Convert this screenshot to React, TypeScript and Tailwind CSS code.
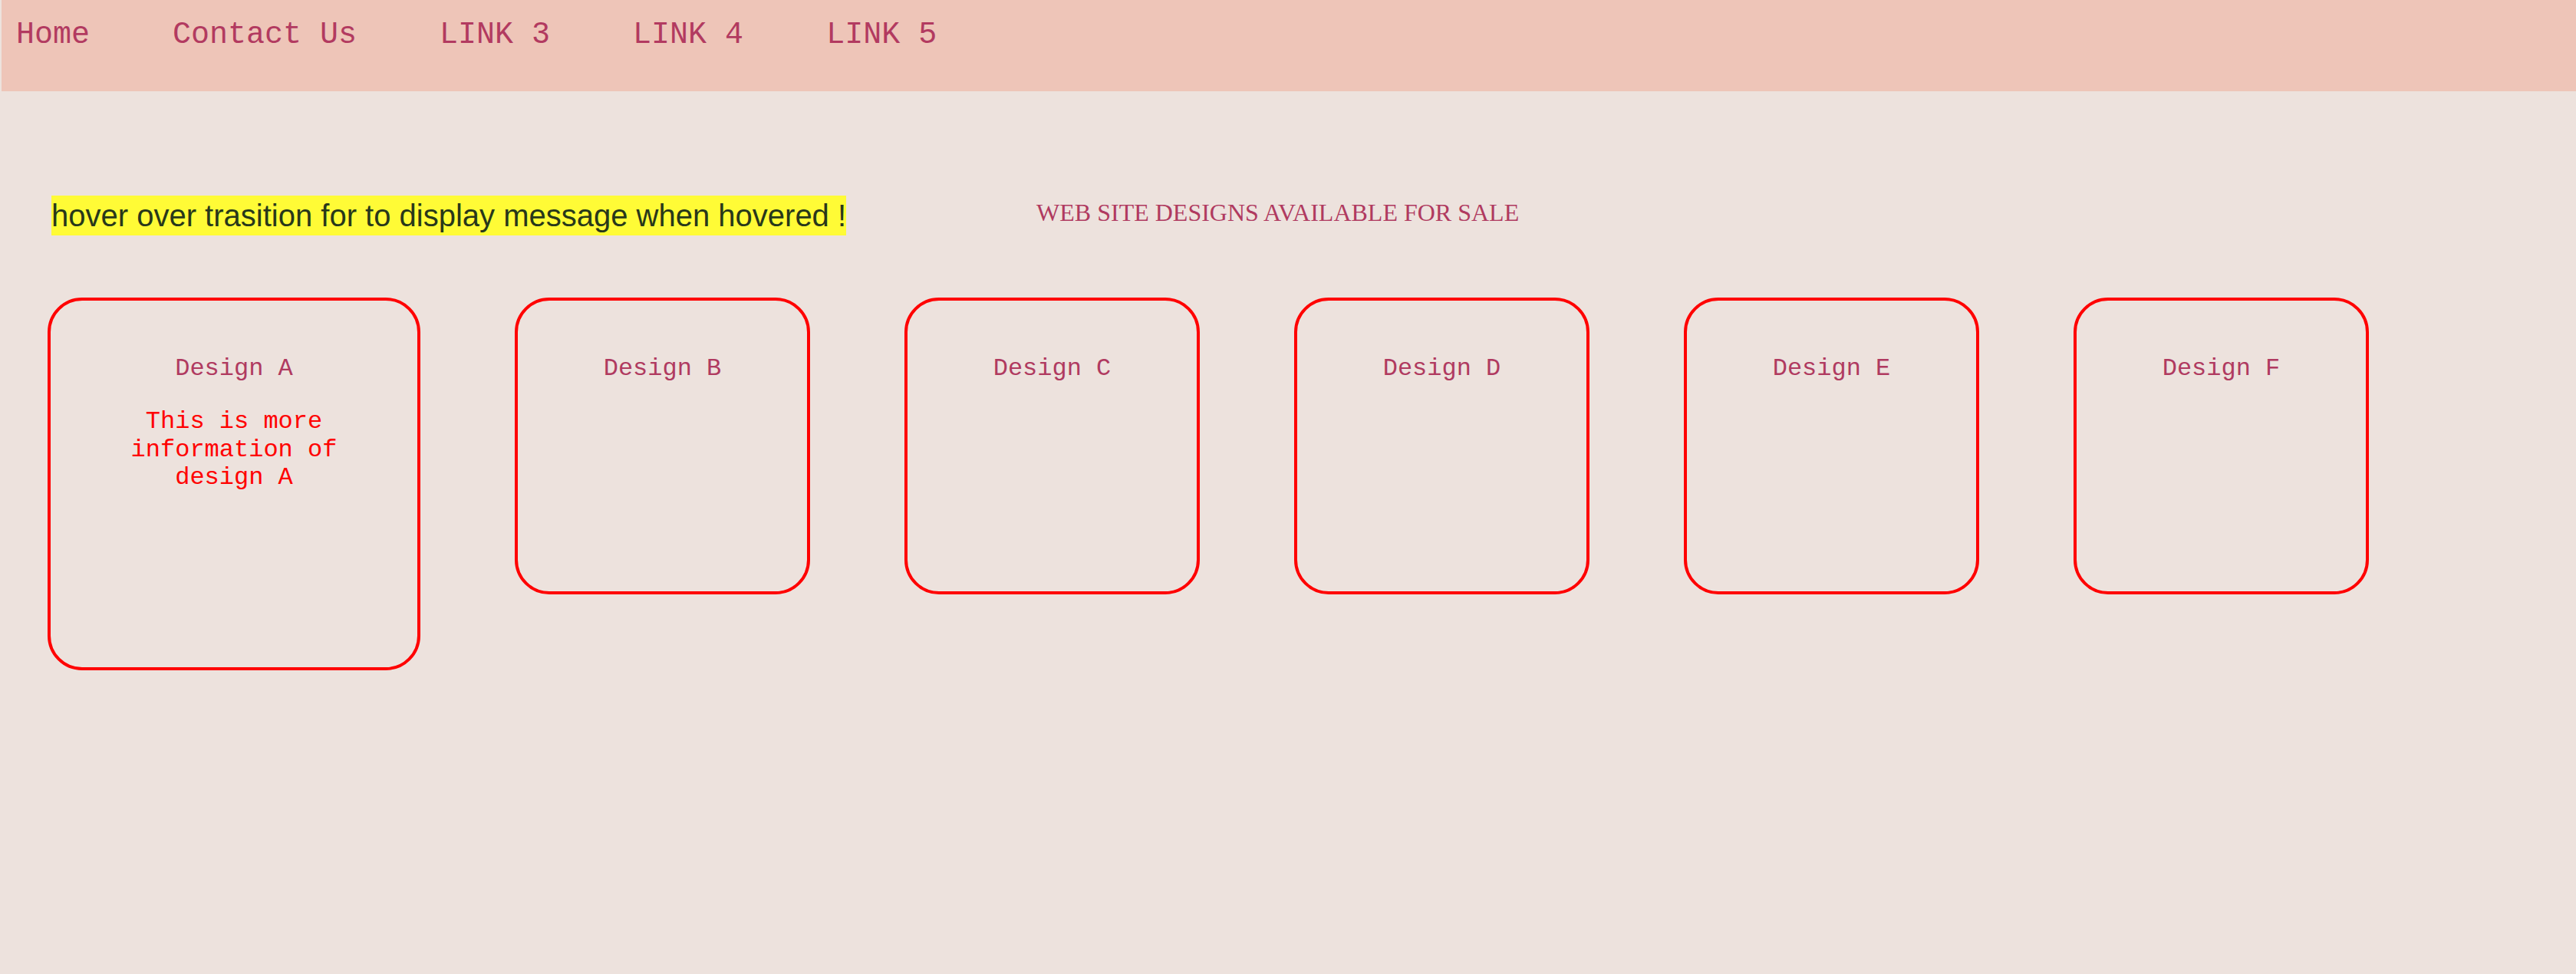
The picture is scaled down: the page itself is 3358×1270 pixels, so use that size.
import React from "react";

const NavBar = () => {
  const links = ["Home", "Contact Us", "LINK 3", "LINK 4", "LINK 5"];

  return (
    <nav className="ml-[2px] h-[119px] bg-[#eec5b8] pl-[19px] pt-[23px]">
      <ul className="flex gap-[108px]">
        {links.map((link) => (
          <li key={link}>
            <a
              href="#"
              className="whitespace-pre font-['Liberation_Mono','Courier_New',monospace] text-[40px] leading-[1.133] text-[#b23a60]"
            >
              {link}
            </a>
          </li>
        ))}
      </ul>
    </nav>
  );
};

const DesignCard = ({
  name,
  info,
  hovered,
}: {
  name: string;
  info?: string;
  hovered?: boolean;
}) => {
  return (
    <div
      className={
        hovered
          ? "w-[486px] h-[486px] shrink-0 rounded-[45px] border-4 border-[#ff0000] pt-[71px] text-center font-['Liberation_Mono','Courier_New',monospace] text-[32px] leading-[1.133]"
          : "w-[385px] h-[387px] shrink-0 rounded-[45px] border-4 border-[#ff0000] pt-[71px] text-center font-['Liberation_Mono','Courier_New',monospace] text-[32px] leading-[1.133]"
      }
    >
      <h3 className="whitespace-pre text-[#b03a60]">{name}</h3>
      {hovered && info && (
        <p className="mx-auto mt-[33px] w-[300px] text-[#ff0000]">{info}</p>
      )}
    </div>
  );
};

export default function App() {
  const designs = [
    { name: "Design A", info: "This is more information of design A" },
    { name: "Design B" },
    { name: "Design C" },
    { name: "Design D" },
    { name: "Design E" },
    { name: "Design F" },
  ];

  return (
    <div className="min-h-[1270px] bg-[#ede2dd]">
      <NavBar />

      {/* Headline row */}
      <div className="flex items-start pl-[67px] pt-[136px]">
        <span className="inline-block bg-[#fffb36] font-['Liberation_Sans',Arial,sans-serif] text-[40px] leading-[52px] text-[#28381a]">
          hover over trasition for to display message when hovered !
        </span>
        <h2 className="ml-[248px] mt-[6px] font-['Liberation_Serif','Times_New_Roman',serif] text-[32px] leading-[32px] text-[#b03a60]">
          WEB SITE DESIGNS AVAILABLE FOR SALE
        </h2>
      </div>

      {/* Design cards */}
      <div className="flex items-start gap-[123px] pl-[62px] pt-[81px]">
        {designs.map((design, i) => (
          <DesignCard
            key={design.name}
            name={design.name}
            info={design.info}
            hovered={i === 0}
          />
        ))}
      </div>
    </div>
  );
}
